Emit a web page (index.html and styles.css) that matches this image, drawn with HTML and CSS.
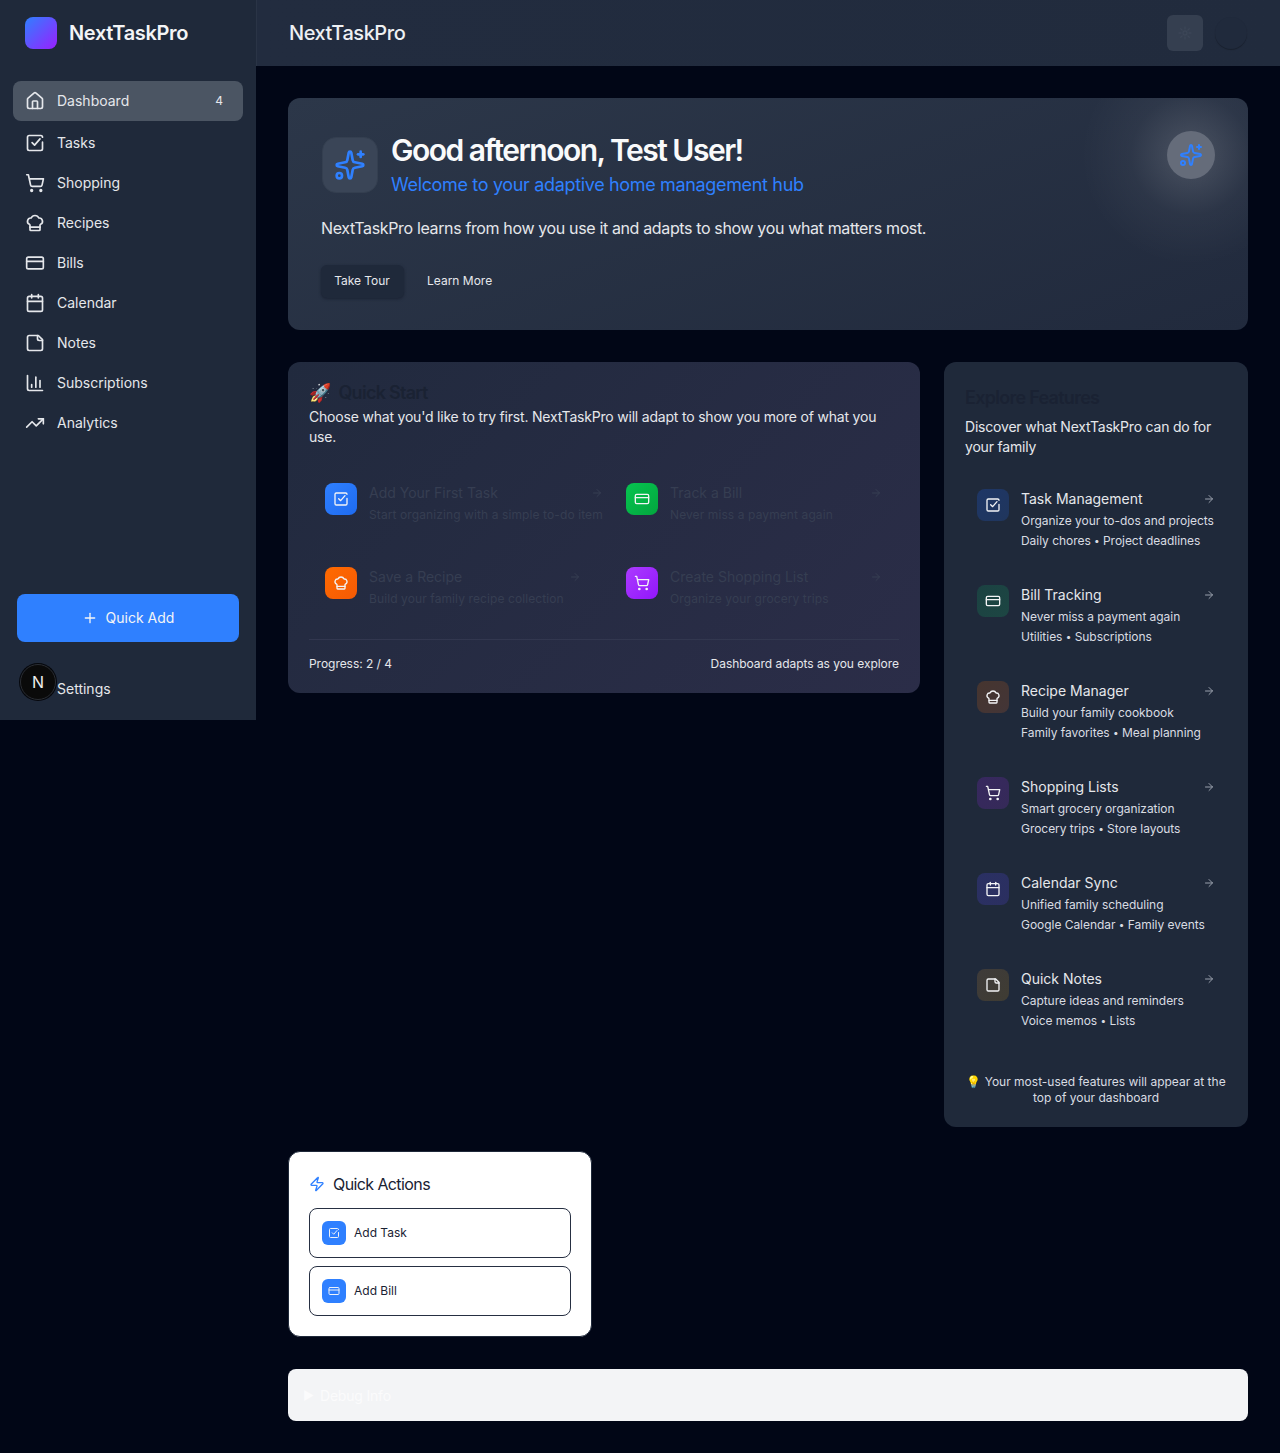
FILE: index.html
```html
<!DOCTYPE html>
<html>
<head>
    <title>NextTaskPro</title>
    <link rel="stylesheet" href="styles.css">
</head>
<body>
    <svg class="sprite" xmlns="http://www.w3.org/2000/svg">
        <symbol id="i-home" viewBox="0 0 24 24"><path d="M15 21v-8a1 1 0 0 0-1-1h-4a1 1 0 0 0-1 1v8"/><path d="M3 10a2 2 0 0 1 .709-1.528l7-5.999a2 2 0 0 1 2.582 0l7 5.999A2 2 0 0 1 21 10v9a2 2 0 0 1-2 2H5a2 2 0 0 1-2-2z"/></symbol>
        <symbol id="i-check" viewBox="0 0 24 24"><path d="M21 11v8a2 2 0 0 1-2 2H5a2 2 0 0 1-2-2V5a2 2 0 0 1 2-2h14a2 2 0 0 1 2 2"/><path d="m8.5 11.5 3 3L18 7"/></symbol>
        <symbol id="i-cart" viewBox="0 0 24 24"><circle cx="8" cy="21" r="1"/><circle cx="19" cy="21" r="1"/><path d="M2.05 2.05h2l2.66 12.42a2 2 0 0 0 2 1.58h9.78a2 2 0 0 0 1.95-1.57l1.65-7.43H5.12"/></symbol>
        <symbol id="i-chef" viewBox="0 0 24 24"><path d="M17 21a1 1 0 0 0 1-1v-5.35c0-.457.316-.844.727-1.041a4 4 0 0 0-2.134-7.589 5 5 0 0 0-9.186 0 4 4 0 0 0-2.134 7.588c.411.198.727.585.727 1.041V20a1 1 0 0 0 1 1Z"/><path d="M6 17h12"/></symbol>
        <symbol id="i-card" viewBox="0 0 24 24"><rect width="20" height="14" x="2" y="5" rx="2"/><path d="M2 10h20"/></symbol>
        <symbol id="i-calendar" viewBox="0 0 24 24"><path d="M8 2v4"/><path d="M16 2v4"/><rect width="18" height="18" x="3" y="4" rx="2"/><path d="M3 10h18"/></symbol>
        <symbol id="i-note" viewBox="0 0 24 24"><path d="M16 3H5a2 2 0 0 0-2 2v14a2 2 0 0 0 2 2h14a2 2 0 0 0 2-2V8Z"/><path d="M15 3v4a2 2 0 0 0 2 2h4"/></symbol>
        <symbol id="i-chart" viewBox="0 0 24 24"><path d="M3 3v16a2 2 0 0 0 2 2h16"/><path d="M18 17V9"/><path d="M13 17V5"/><path d="M8 17v-3"/></symbol>
        <symbol id="i-trend" viewBox="0 0 24 24"><path d="M22 7 13.5 15.5 8.5 10.5 2 17"/><path d="M16 7h6v6"/></symbol>
        <symbol id="i-plus" viewBox="0 0 24 24"><path d="M5 12h14"/><path d="M12 5v14"/></symbol>
        <symbol id="i-arrow" viewBox="0 0 24 24"><path d="M5 12h14"/><path d="m12 5 7 7-7 7"/></symbol>
        <symbol id="i-spark" viewBox="0 0 24 24"><path d="M11.017 2.814a1 1 0 0 1 1.966 0l1.051 5.558a2 2 0 0 0 1.594 1.594l5.558 1.051a1 1 0 0 1 0 1.966l-5.558 1.051a2 2 0 0 0-1.594 1.594l-1.051 5.558a1 1 0 0 1-1.966 0l-1.051-5.558a2 2 0 0 0-1.594-1.594l-5.558-1.051a1 1 0 0 1 0-1.966l5.558-1.051a2 2 0 0 0 1.594-1.594z"/><path d="M20 2v4"/><path d="M22 4h-4"/><circle cx="4" cy="20" r="2"/></symbol>
        <symbol id="i-zap" viewBox="0 0 24 24"><path d="M4 14a1 1 0 0 1-.78-1.63l9.9-10.2a.5.5 0 0 1 .86.46l-1.92 6.02A1 1 0 0 0 13 10h7a1 1 0 0 1 .78 1.63l-9.9 10.2a.5.5 0 0 1-.86-.46l1.92-6.02A1 1 0 0 0 11 14z"/></symbol>
        <symbol id="i-gear" viewBox="0 0 24 24"><circle cx="12" cy="12" r="3"/><path d="M12 3v3M12 18v3M3 12h3M18 12h3M5.6 5.6l2.1 2.1M16.3 16.3l2.1 2.1M5.6 18.4l2.1-2.1M16.3 7.7l2.1-2.1"/></symbol>
    </svg>

    <div class="app">
        <aside class="sidebar">
            <div class="brand">
                <div class="brand-logo"></div>
                <span class="brand-name">NextTaskPro</span>
            </div>
            <nav class="nav">
                <a class="nav-item active"><svg class="icon nav-icon"><use href="#i-home"/></svg>Dashboard<span class="nav-badge">4</span></a>
                <a class="nav-item"><svg class="icon nav-icon"><use href="#i-check"/></svg>Tasks</a>
                <a class="nav-item"><svg class="icon nav-icon"><use href="#i-cart"/></svg>Shopping</a>
                <a class="nav-item"><svg class="icon nav-icon"><use href="#i-chef"/></svg>Recipes</a>
                <a class="nav-item"><svg class="icon nav-icon"><use href="#i-card"/></svg>Bills</a>
                <a class="nav-item"><svg class="icon nav-icon"><use href="#i-calendar"/></svg>Calendar</a>
                <a class="nav-item"><svg class="icon nav-icon"><use href="#i-note"/></svg>Notes</a>
                <a class="nav-item"><svg class="icon nav-icon"><use href="#i-chart"/></svg>Subscriptions</a>
                <a class="nav-item"><svg class="icon nav-icon"><use href="#i-trend"/></svg>Analytics</a>
            </nav>
            <button class="quick-add"><svg class="icon plus-icon"><use href="#i-plus"/></svg>Quick Add</button>
            <a class="nav-item settings">Settings</a>
            <div class="dev-badge">N</div>
        </aside>

        <div class="content">
            <header class="topbar">
                <h2 class="topbar-title">NextTaskPro</h2>
                <div class="topbar-actions">
                    <div class="square-btn"><svg class="icon gear-icon"><use href="#i-gear"/></svg></div>
                    <div class="avatar"></div>
                </div>
            </header>

            <main class="main">
                <section class="hero">
                    <div class="hero-glow"><svg class="icon glow-icon"><use href="#i-spark"/></svg></div>
                    <div class="hero-head">
                        <div class="hero-icon"><svg class="icon spark-icon"><use href="#i-spark"/></svg></div>
                        <div>
                            <h1 class="hero-title">Good afternoon, Test User!</h1>
                            <p class="hero-sub">Welcome to your adaptive home management hub</p>
                        </div>
                    </div>
                    <p class="hero-text">NextTaskPro learns from how you use it and adapts to show you what matters most.</p>
                    <div class="hero-buttons">
                        <button class="btn-tour">Take Tour</button>
                        <button class="btn-more">Learn More</button>
                    </div>
                </section>

                <div class="columns">
                    <section class="quick-start">
                        <h3 class="card-title"><span class="emoji">🚀</span>Quick Start</h3>
                        <p class="card-text">Choose what you'd like to try first. NextTaskPro will adapt to show you more of what you use.</p>
                        <div class="qs-grid">
                            <div class="qs-item">
                                <div class="tile blue"><svg class="icon tile-icon"><use href="#i-check"/></svg></div>
                                <div class="qs-body">
                                    <div class="qs-title">Add Your First Task<svg class="icon qs-arrow"><use href="#i-arrow"/></svg></div>
                                    <div class="qs-desc">Start organizing with a simple to-do item</div>
                                </div>
                            </div>
                            <div class="qs-item">
                                <div class="tile green"><svg class="icon tile-icon"><use href="#i-card"/></svg></div>
                                <div class="qs-body">
                                    <div class="qs-title">Track a Bill<svg class="icon qs-arrow"><use href="#i-arrow"/></svg></div>
                                    <div class="qs-desc">Never miss a payment again</div>
                                </div>
                            </div>
                            <div class="qs-item">
                                <div class="tile orange"><svg class="icon tile-icon"><use href="#i-chef"/></svg></div>
                                <div class="qs-body">
                                    <div class="qs-title">Save a Recipe<svg class="icon qs-arrow"><use href="#i-arrow"/></svg></div>
                                    <div class="qs-desc">Build your family recipe collection</div>
                                </div>
                            </div>
                            <div class="qs-item">
                                <div class="tile purple"><svg class="icon tile-icon"><use href="#i-cart"/></svg></div>
                                <div class="qs-body">
                                    <div class="qs-title">Create Shopping List<svg class="icon qs-arrow"><use href="#i-arrow"/></svg></div>
                                    <div class="qs-desc">Organize your grocery trips</div>
                                </div>
                            </div>
                        </div>
                        <div class="qs-footer">
                            <span>Progress: 2 / 4</span>
                            <span>Dashboard adapts as you explore</span>
                        </div>
                    </section>

                    <section class="explore">
                        <h3 class="card-title">Explore Features</h3>
                        <p class="card-text explore-text">Discover what NextTaskPro can do for your family</p>
                        <div class="feature-list">
                            <div class="feature">
                                <div class="tile tint-blue"><svg class="icon tile-icon"><use href="#i-check"/></svg></div>
                                <div class="feature-body">
                                    <div class="feature-title">Task Management<svg class="icon feature-arrow"><use href="#i-arrow"/></svg></div>
                                    <div class="feature-line">Organize your to-dos and projects</div>
                                    <div class="feature-line">Daily chores <span class="dot">•</span> Project deadlines</div>
                                </div>
                            </div>
                            <div class="feature">
                                <div class="tile tint-green"><svg class="icon tile-icon"><use href="#i-card"/></svg></div>
                                <div class="feature-body">
                                    <div class="feature-title">Bill Tracking<svg class="icon feature-arrow"><use href="#i-arrow"/></svg></div>
                                    <div class="feature-line">Never miss a payment again</div>
                                    <div class="feature-line">Utilities <span class="dot">•</span> Subscriptions</div>
                                </div>
                            </div>
                            <div class="feature">
                                <div class="tile tint-orange"><svg class="icon tile-icon"><use href="#i-chef"/></svg></div>
                                <div class="feature-body">
                                    <div class="feature-title">Recipe Manager<svg class="icon feature-arrow"><use href="#i-arrow"/></svg></div>
                                    <div class="feature-line">Build your family cookbook</div>
                                    <div class="feature-line">Family favorites <span class="dot">•</span> Meal planning</div>
                                </div>
                            </div>
                            <div class="feature">
                                <div class="tile tint-purple"><svg class="icon tile-icon"><use href="#i-cart"/></svg></div>
                                <div class="feature-body">
                                    <div class="feature-title">Shopping Lists<svg class="icon feature-arrow"><use href="#i-arrow"/></svg></div>
                                    <div class="feature-line">Smart grocery organization</div>
                                    <div class="feature-line">Grocery trips <span class="dot">•</span> Store layouts</div>
                                </div>
                            </div>
                            <div class="feature">
                                <div class="tile tint-indigo"><svg class="icon tile-icon"><use href="#i-calendar"/></svg></div>
                                <div class="feature-body">
                                    <div class="feature-title">Calendar Sync<svg class="icon feature-arrow"><use href="#i-arrow"/></svg></div>
                                    <div class="feature-line">Unified family scheduling</div>
                                    <div class="feature-line">Google Calendar <span class="dot">•</span> Family events</div>
                                </div>
                            </div>
                            <div class="feature">
                                <div class="tile tint-yellow"><svg class="icon tile-icon"><use href="#i-note"/></svg></div>
                                <div class="feature-body">
                                    <div class="feature-title">Quick Notes<svg class="icon feature-arrow"><use href="#i-arrow"/></svg></div>
                                    <div class="feature-line">Capture ideas and reminders</div>
                                    <div class="feature-line">Voice memos <span class="dot">•</span> Lists</div>
                                </div>
                            </div>
                        </div>
                        <p class="explore-tip"><span class="emoji">💡</span> Your most-used features will appear at the top of your dashboard</p>
                    </section>
                </div>

                <section class="quick-actions">
                    <h3 class="qa-title"><svg class="icon zap-icon"><use href="#i-zap"/></svg>Quick Actions</h3>
                    <button class="qa-btn"><span class="qa-tile"><svg class="icon qa-icon"><use href="#i-check"/></svg></span>Add Task</button>
                    <button class="qa-btn"><span class="qa-tile"><svg class="icon qa-icon"><use href="#i-card"/></svg></span>Add Bill</button>
                </section>

                <div class="debug">▶ <span class="debug-label">Debug Info</span></div>
            </main>
        </div>
    </div>
</body>
</html>
```

FILE: styles.css
```css
* {
    box-sizing: border-box;
}
body {
    margin: 0;
    background-color: #010616;
    color: #e8ebf0;
    font-family: Inter, "Liberation Sans", sans-serif;
    font-size: 14px;
}
h1, h2, h3, p {
    margin: 0;
}
button {
    font-family: inherit;
    border: none;
    cursor: pointer;
}
.sprite {
    display: none;
}
.icon {
    fill: none;
    stroke: currentColor;
    stroke-width: 2;
    stroke-linecap: round;
    stroke-linejoin: round;
    flex-shrink: 0;
}
.emoji {
    font-family: "Noto Color Emoji", sans-serif;
}

.app {
    display: flex;
    align-items: flex-start;
}

/* sidebar */
.sidebar {
    position: relative;
    width: 256px;
    height: 720px;
    flex-shrink: 0;
    display: flex;
    flex-direction: column;
    background-color: #1f293a;
}
.brand {
    display: flex;
    align-items: center;
    gap: 12px;
    height: 66px;
    padding: 0 25px;
}
.brand-logo {
    width: 32px;
    height: 32px;
    border-radius: 8px;
    background: linear-gradient(135deg, #2f80ff, #9a1fff);
}
.brand-name {
    font-size: 20px;
    font-weight: 600;
    letter-spacing: -0.35px;
    color: #f3f4f6;
}
.nav {
    flex: 1;
    display: flex;
    flex-direction: column;
    gap: 2px;
    padding: 15px 13px 0;
}
.nav-item {
    display: flex;
    align-items: center;
    gap: 12px;
    height: 38px;
    padding: 0 12px;
    font-weight: 400;
    line-height: 20px;
    color: #e5e7eb;
}
.nav-item.active {
    height: 40px;
    background-color: #4b5563;
    border-radius: 8px;
    margin-bottom: 1px;
}
.nav-icon {
    width: 20px;
    height: 20px;
}
.nav-badge {
    margin-left: auto;
    padding-right: 8px;
    font-size: 12px;
}
.quick-add {
    display: flex;
    align-items: center;
    justify-content: center;
    gap: 8px;
    height: 48px;
    margin: 0 17px;
    background-color: #2f80ff;
    border-radius: 8px;
    color: #f3f4f6;
    font-size: 14px;
    font-weight: 400;
    line-height: 20px;
}
.plus-icon {
    width: 16px;
    height: 16px;
}
.settings {
    margin: 28px 0 12px 57px;
    padding: 0;
}
.dev-badge {
    position: absolute;
    left: 20px;
    top: 664px;
    width: 36px;
    height: 36px;
    border-radius: 50%;
    background-color: #0a0a0a;
    border: 1px solid #2a2d33;
    box-shadow: 0 0 0 1px #05070c;
    display: flex;
    align-items: center;
    justify-content: center;
    color: #eee;
    font-size: 16px;
    font-weight: 400;
}

/* top bar */
.content {
    flex: 1;
    min-width: 0;
}
.topbar {
    display: flex;
    align-items: center;
    justify-content: space-between;
    height: 66px;
    padding: 0 33px 0 32px;
    background: linear-gradient(90deg, #222c3f, #212b3d);
    border-left: 1px solid #2a3446;
}
.topbar-title {
    font-size: 20px;
    font-weight: 500;
    letter-spacing: -0.45px;
    color: #eef0f3;
}
.topbar-actions {
    display: flex;
    align-items: center;
    gap: 12px;
}
.square-btn {
    width: 36px;
    height: 36px;
    border-radius: 6px;
    background-color: #353f50;
    display: flex;
    align-items: center;
    justify-content: center;
    color: #3c4657;
}
.gear-icon {
    width: 16px;
    height: 16px;
}
.avatar {
    width: 32px;
    height: 32px;
    border-radius: 50%;
    background-color: #202a3c;
    box-shadow: 0 1px 1px rgba(0, 0, 0, 0.25);
}

/* main */
.main {
    padding: 32px;
}
.hero {
    position: relative;
    height: 232px;
    padding: 33px;
    border-radius: 12px;
    background:
        radial-gradient(circle at 903px 57px, rgba(255, 255, 255, 0.12) 24px, rgba(255, 255, 255, 0.04) 60px, transparent 110px),
        linear-gradient(160deg, #2c3749, #212a3d);
}
.hero-glow {
    position: absolute;
    top: 33px;
    right: 33px;
    width: 48px;
    height: 48px;
    border-radius: 50%;
    background-color: #656c7a;
    display: flex;
    align-items: center;
    justify-content: center;
    color: #2f80ff;
}
.glow-icon {
    width: 24px;
    height: 24px;
}
.hero-head {
    display: flex;
    align-items: center;
    gap: 13px;
    padding-left: 1px;
}
.hero-icon {
    width: 56px;
    height: 56px;
    border-radius: 14px;
    background-color: #3a4557;
    border: 1px solid #343f50;
    display: flex;
    align-items: center;
    justify-content: center;
    color: #2f80ff;
}
.spark-icon {
    width: 32px;
    height: 32px;
}
.hero-title {
    padding-top: 1px;
    font-size: 30px;
    line-height: 36px;
    font-weight: 600;
    letter-spacing: -1.5px;
    color: #f9fafb;
}
.hero-sub {
    margin-top: 3px;
    font-size: 18px;
    line-height: 28px;
    letter-spacing: -0.34px;
    color: #2f80ff;
}
.hero-text {
    margin-top: 17px;
    font-size: 16px;
    line-height: 24px;
    letter-spacing: -0.36px;
    color: #e5e7eb;
}
.hero-buttons {
    display: flex;
    align-items: center;
    margin-top: 25px;
}
.btn-tour {
    height: 33px;
    width: 83px;
    padding: 0 1px 2px 0;
    border-radius: 6px;
    background-color: #1f293a;
    box-shadow: 0 1px 3px #1a2232;
    color: #e5e7eb;
    font-size: 12px;
    font-weight: 400;
    letter-spacing: -0.05px;
}
.btn-more {
    margin-left: 10px;
    height: 33px;
    padding: 0 13px 2px;
    background: none;
    color: #e5e7eb;
    font-size: 12px;
    font-weight: 400;
}

.columns {
    display: grid;
    grid-template-columns: 632px 304px;
    gap: 24px;
    align-items: start;
    margin-top: 32px;
}
.card-title {
    font-size: 18px;
    line-height: 20px;
    font-weight: 600;
    letter-spacing: -0.72px;
    color: #1a2233;
}
.card-title .emoji {
    margin-right: 7px;
    letter-spacing: 0;
}
.card-text {
    margin-top: 4px;
    line-height: 20px;
    letter-spacing: -0.2px;
    color: #e5e7eb;
}

/* quick start */
.quick-start {
    height: 331px;
    padding: 21px 21px 0;
    border-radius: 12px;
    background: linear-gradient(135deg, #212a3e, #2b2d48);
}
.qs-grid {
    display: grid;
    grid-template-columns: 301px 289px;
    row-gap: 12px;
    margin-top: 20px;
}
.qs-item {
    display: flex;
    gap: 12px;
    padding: 16px;
    height: 72px;
}
.tile {
    width: 32px;
    height: 32px;
    border-radius: 8px;
    display: flex;
    align-items: center;
    justify-content: center;
    flex-shrink: 0;
    color: #f3f4f6;
}
.tile-icon {
    width: 16px;
    height: 16px;
}
.blue { background: linear-gradient(135deg, #2f80ff, #1e6bf0); }
.green { background: linear-gradient(135deg, #06c450, #03a63e); }
.orange { background: linear-gradient(135deg, #ff6a00, #f45a05); }
.purple { background: linear-gradient(135deg, #ab3bff, #9216fb); }
.qs-body {
    min-width: 212px;
    flex-shrink: 0;
}
.qs-title {
    display: flex;
    align-items: center;
    justify-content: space-between;
    line-height: 20px;
    font-weight: 400;
    color: #363e52;
}
.qs-arrow {
    width: 12px;
    height: 12px;
}
.qs-desc {
    margin-top: 4px;
    font-size: 12px;
    line-height: 16px;
    letter-spacing: 0.1px;
    white-space: nowrap;
    color: #363e52;
}
.qs-footer {
    display: flex;
    justify-content: space-between;
    align-items: center;
    margin-top: 16px;
    padding-top: 16px;
    border-top: 1px solid #32374f;
    font-size: 12px;
    line-height: 16px;
    letter-spacing: -0.04px;
    color: #e5e7eb;
}

/* explore */
.explore {
    height: 765px;
    padding: 26px 21px 21px;
    border-radius: 12px;
    background-color: #1f293a;
}
.explore-text {
    margin-top: 9px;
}
.feature-list {
    display: flex;
    flex-direction: column;
    gap: 10px;
    margin-top: 20px;
}
.feature {
    display: flex;
    gap: 12px;
    padding: 12px;
    height: 86px;
}
.feature-body {
    flex: 1;
    min-width: 0;
}
.feature-title {
    display: flex;
    align-items: center;
    justify-content: space-between;
    line-height: 20px;
    font-weight: 400;
    color: #e5e7eb;
}
.feature-arrow {
    width: 12px;
    height: 12px;
    color: #9aa1ad;
}
.feature-line {
    font-size: 12px;
    line-height: 20px;
    letter-spacing: -0.04px;
    white-space: nowrap;
    color: #d9dce2;
}
.feature-title + .feature-line {
    margin-top: 2px;
}
.dot {
    font-size: 10px;
    line-height: 0;
    vertical-align: 1px;
}
.tint-blue { background: linear-gradient(135deg, #1e3666, #20365d); }
.tint-green { background: linear-gradient(135deg, #1b4242, #1d4643); }
.tint-orange { background: linear-gradient(135deg, #46352f, #433537); }
.tint-purple { background: linear-gradient(135deg, #37285f, #352a58); }
.tint-indigo { background: linear-gradient(135deg, #2a3063, #2b2f60); }
.tint-yellow { background: linear-gradient(135deg, #3e3b3a, #3f3c33); }
.explore-tip {
    margin-top: 31px;
    text-align: center;
    font-size: 12px;
    line-height: 16px;
    color: #d9dce2;
}

/* quick actions */
.quick-actions {
    width: 304px;
    height: 186px;
    margin-top: 24px;
    padding: 21px 20px;
    background-color: #ffffff;
    border: 1px solid #1f293a;
    border-radius: 12px;
}
.qa-title {
    display: flex;
    align-items: center;
    gap: 8px;
    height: 22px;
    margin-bottom: 13px;
    font-size: 16px;
    font-weight: 400;
    line-height: 20px;
    letter-spacing: -0.6px;
    color: #1a2233;
}
.zap-icon {
    width: 16px;
    height: 16px;
    color: #2f80ff;
}
.qa-btn {
    display: flex;
    align-items: center;
    gap: 8px;
    width: 100%;
    height: 50px;
    padding: 0 12px 1px;
    margin-bottom: 8px;
    background: none;
    border: 1px solid #262f42;
    border-radius: 8px;
    color: #1a2233;
    font-size: 12px;
    font-weight: 400;
    line-height: 16px;
}
.qa-tile {
    width: 24px;
    height: 24px;
    border-radius: 6px;
    background-color: #2f80ff;
    display: flex;
    align-items: center;
    justify-content: center;
    color: #eef2f9;
}
.qa-icon {
    width: 12px;
    height: 12px;
}

/* debug */
.debug {
    height: 52px;
    margin-top: 32px;
    padding: 0 15px;
    display: flex;
    align-items: center;
    gap: 6px;
    background-color: #f3f4f6;
    border-radius: 8px;
    font-size: 12px;
    color: #fbfbfc;
}
.debug-label {
    font-size: 14px;
    font-weight: 400;
    letter-spacing: -0.2px;
}
```
